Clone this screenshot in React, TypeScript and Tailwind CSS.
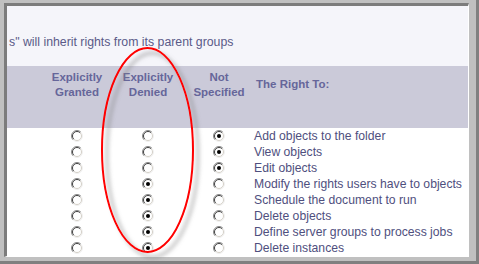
import React from "react";

type Choice = "granted" | "denied" | "none";

const rights: { label: string; value: Choice }[] = [
  { label: "Add objects to the folder", value: "none" },
  { label: "View objects", value: "none" },
  { label: "Edit objects", value: "none" },
  { label: "Modify the rights users have to objects", value: "denied" },
  { label: "Schedule the document to run", value: "denied" },
  { label: "Delete objects", value: "denied" },
  { label: "Define server groups to process jobs", value: "denied" },
  { label: "Delete instances", value: "denied" },
];

// Old-style windows radio button
const Radio = ({ checked }: { checked: boolean }) => (
  <svg width="12" height="12" viewBox="0 0 12 12" className="block">
    <circle cx="6" cy="6" r="5.5" fill="#ffffff" />
    <path d="M2.1 9.9 A5.5 5.5 0 0 1 9.9 2.1" fill="none" stroke="#8a8a8a" strokeWidth="1" />
    <path d="M2.8 9.2 A4.5 4.5 0 0 1 9.2 2.8" fill="none" stroke="#404040" strokeWidth="1" />
    <path d="M9.9 2.1 A5.5 5.5 0 0 1 2.1 9.9" fill="none" stroke="#f0f0f0" strokeWidth="1" />
    <path d="M9.2 2.8 A4.5 4.5 0 0 1 2.8 9.2" fill="none" stroke="#d4d0c8" strokeWidth="1" />
    {checked && <circle cx="6" cy="6" r="2" fill="#000000" />}
  </svg>
);

export default function App() {
  return (
    <div
      className="relative w-[479px] h-[264px] bg-[#c0c0c0] border-r-[3px] border-b-[3px] border-[#808080] pt-[3px] pl-[4px] pr-[4px] pb-[4px] overflow-hidden"
      style={{ fontFamily: '"Liberation Sans", Arial, sans-serif' }}
    >
      <div className="w-[465px] h-[254px] border-t-[3px] border-l-[3px] border-t-[#7c7c7c] border-l-[#7c7c7c] border-r border-b border-r-white border-b-white bg-white">
        {/* intro text */}
        <div className="h-[60px] bg-[#f5f5fa] flex flex-col justify-end pb-[16px] pl-[2px]">
          <span className="text-[12.3px] leading-[15px] text-[#5a5a88] whitespace-nowrap">
            s" will inherit rights from its parent groups
          </span>
        </div>

        {/* header */}
        <div className="h-[62px] bg-[#cbcad9] grid grid-cols-[70px_72px_70px_1fr] pl-[35px] text-[11.5px] leading-[15px] font-bold text-[#66669a]">
          <div className="pt-[4px] text-center">
            Explicitly
            <br />
            Granted
          </div>
          <div className="pt-[4px] text-center">
            Explicitly
            <br />
            Denied
          </div>
          <div className="pt-[4px] text-center whitespace-nowrap">
            Not
            <br />
            Specified
          </div>
          <div className="pt-[11px] pl-[2px]">The Right To:</div>
        </div>

        {/* rows */}
        <div className="flex flex-col">
          {rights.map((r) => (
            <div
              key={r.label}
              className="h-[16px] grid grid-cols-[70px_72px_70px_1fr] pl-[35px] items-center"
            >
              <div className="flex justify-center">
                <Radio checked={r.value === "granted"} />
              </div>
              <div className="flex justify-center">
                <Radio checked={r.value === "denied"} />
              </div>
              <div className="flex justify-center">
                <Radio checked={r.value === "none"} />
              </div>
              <div className="text-[12.2px] leading-[16px] text-[#4f4f7e] whitespace-nowrap">
                {r.label}
              </div>
            </div>
          ))}
        </div>
      </div>

      {/* red highlight ellipse drawn over the screenshot */}
      <svg
        className="absolute left-0 top-0 pointer-events-none"
        width="479"
        height="264"
        viewBox="0 0 479 264"
      >
        <defs>
          <filter id="shadow" x="-20%" y="-20%" width="140%" height="140%">
            <feDropShadow dx="5" dy="5" stdDeviation="2" floodColor="#808080" floodOpacity="0.75" />
          </filter>
        </defs>
        <ellipse
          cx="147.5"
          cy="150"
          rx="45.5"
          ry="102"
          fill="none"
          stroke="#ff0000"
          strokeWidth="2"
          filter="url(#shadow)"
        />
      </svg>
    </div>
  );
}
